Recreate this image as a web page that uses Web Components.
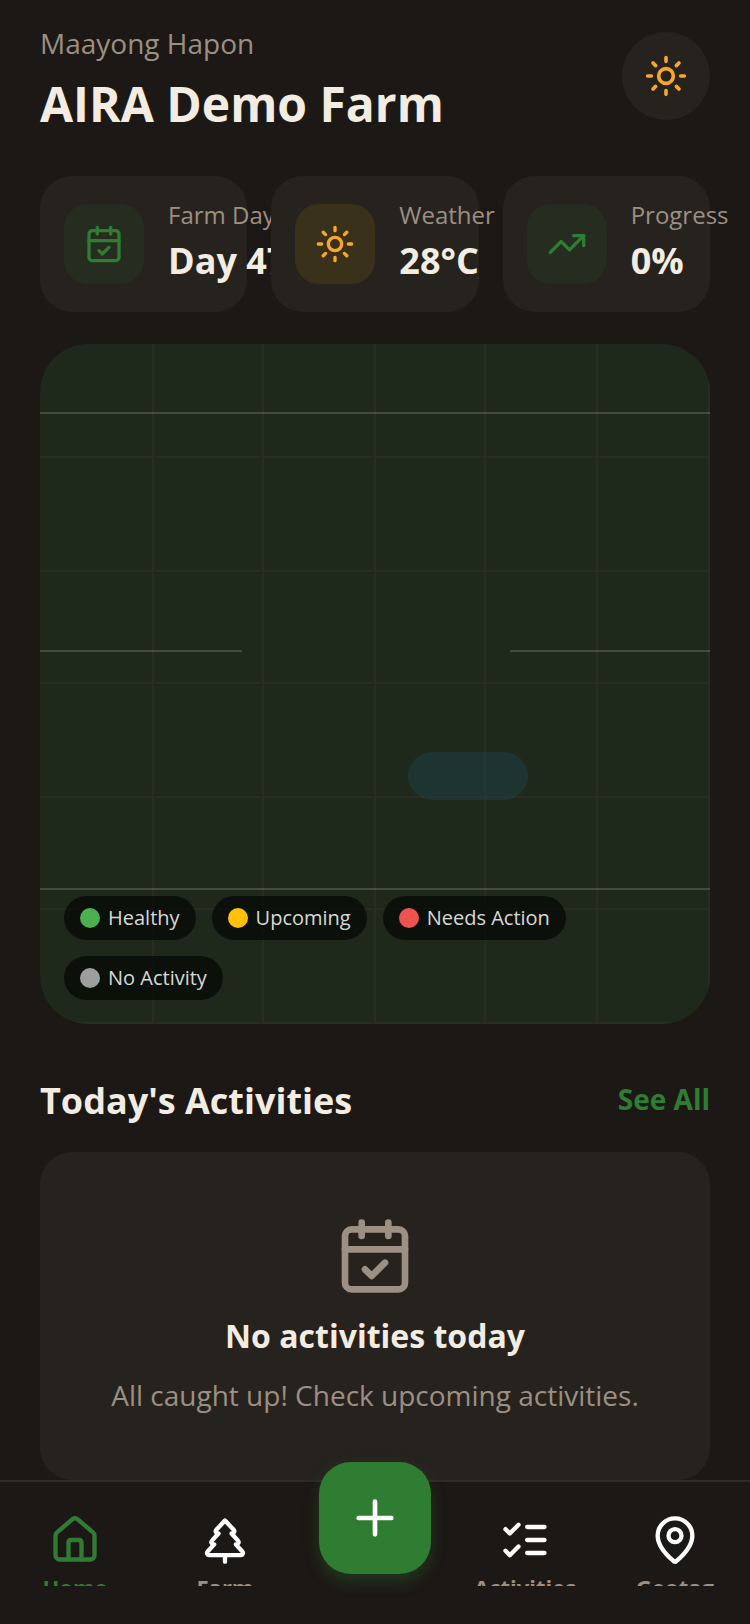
<!DOCTYPE html>
<html lang="en">
<head>
<meta charset="utf-8">
<meta name="viewport" content="width=device-width, initial-scale=1">
<title>AIRA Demo Farm</title>
<style>
  :root {
    --bg: #1c1815;
    --card: #26231e;
    --line: #2f2b28;
    --text: #f2ece2;
    --muted: #9c8f84;
    --green: #2e7d32;
    --amber: #f9a72b;
  }
  body {
    margin: 0;
    background: var(--bg);
    color: var(--text);
    font-family: "Open Sans", "Noto Sans", sans-serif;
  }
</style>
</head>
<body>

<farm-app>
  <farm-header greeting="Maayong Hapon" name="AIRA Demo Farm"></farm-header>

  <stat-row>
    <stat-card icon="calendar" label="Farm Day" value="Day 47"></stat-card>
    <stat-card icon="sun" label="Weather" value="28°C" tone="amber"></stat-card>
    <stat-card icon="trend" label="Progress" value="0%"></stat-card>
  </stat-row>

  <farm-map>
    <map-chip color="#4caf50">Healthy</map-chip>
    <map-chip color="#ffc107">Upcoming</map-chip>
    <map-chip color="#ef5350">Needs Action</map-chip>
    <map-chip color="#9e9e9e">No Activity</map-chip>
  </farm-map>

  <farm-section heading="Today's Activities" link="See All">
    <empty-state icon="calendar" heading="No activities today">All caught up! Check upcoming activities.</empty-state>
  </farm-section>

  <tab-bar slot="nav">
    <tab-item icon="home" active>Home</tab-item>
    <tab-item icon="tree">Farm</tab-item>
    <add-button></add-button>
    <tab-item icon="checks">Activities</tab-item>
    <tab-item icon="pin">Geotag</tab-item>
  </tab-bar>
</farm-app>

<script>
const ICONS = {
  sun: `<circle cx="12" cy="12" r="4"/><path d="M12 2v2M12 20v2M4.93 4.93l1.41 1.41M17.66 17.66l1.41 1.41M2 12h2M20 12h2M6.34 17.66l-1.41 1.41M19.07 4.93l-1.41 1.41"/>`,
  calendar: `<path d="M8 2v4M16 2v4"/><rect width="18" height="18" x="3" y="4" rx="2"/><path d="M3 10h18M9 16l2 2 4-4"/>`,
  trend: `<path d="M22 7l-8.5 8.5-5-5L2 17"/><path d="M16 7h6v6"/>`,
  home: `<path d="M15 21v-8a1 1 0 0 0-1-1h-4a1 1 0 0 0-1 1v8"/><path d="M3 10a2 2 0 0 1 .709-1.528l7-5.999a2 2 0 0 1 2.582 0l7 5.999A2 2 0 0 1 21 10v9a2 2 0 0 1-2 2H5a2 2 0 0 1-2-2z"/>`,
  tree: `<path d="m17 14 3 3.3a1 1 0 0 1-.7 1.7H4.7a1 1 0 0 1-.7-1.7L7 14h-.3a1 1 0 0 1-.7-1.7L9 9h-.2A1 1 0 0 1 8 7.3L12 3l4 4.3a1 1 0 0 1-.8 1.7H15l3 3.3a1 1 0 0 1-.7 1.7H17Z"/><path d="M12 22v-3"/>`,
  checks: `<path d="m3 17 2 2 4-4M3 7l2 2 4-4M13 6h8M13 12h8M13 18h8"/>`,
  pin: `<path d="M20 10c0 4.993-5.539 10.193-7.399 11.799a1 1 0 0 1-1.202 0C9.539 20.193 4 14.993 4 10a8 8 0 0 1 16 0"/><circle cx="12" cy="10" r="3"/>`,
  plus: `<path d="M5 12h14M12 5v14"/>`,
};

class FarmElement extends HTMLElement {
  constructor() {
    super();
    this.attachShadow({ mode: "open" });
  }

  connectedCallback() {
    this.shadowRoot.innerHTML = `<style>${this.css()}</style>${this.html()}`;
  }

  attr(name) {
    return this.getAttribute(name) || "";
  }
}

class FarmIcon extends FarmElement {
  css() {
    return `
      :host{ display: block; flex: none; width: ${this.attr("size")}px; height: ${this.attr("size")}px; }
      svg{ display: block; width: 100%; height: 100%; }
    `;
  }

  html() {
    return `
      <svg viewBox="0 0 24 24" fill="none" stroke="currentColor" stroke-width="2"
        stroke-linecap="round" stroke-linejoin="round" aria-hidden="true">${ICONS[this.attr("name")]}</svg>
    `;
  }
}

class FarmApp extends FarmElement {
  css() {
    return `
      :host{ display: grid; grid-template-rows: minmax(0, 1fr) auto; height: 100vh; }
      main{ overflow: hidden auto; scrollbar-width: none; }
    `;
  }

  html() {
    return `<main><slot></slot></main><slot name="nav"></slot>`;
  }
}

class FarmHeader extends FarmElement {
  css() {
    return `
      :host{ display: block; }
      header{ display: flex; justify-content: space-between; align-items: flex-start; padding: 24px 40px 36px; }
      p, h1{ margin: 0; }
      p{ color: var(--muted); font-size: 28px; line-height: 38px; }
      h1{ margin-top: 6px; font-size: 48px; line-height: 72px; font-weight: 700; }
      button{
        display: grid;
        place-items: center;
        width: 88px;
        height: 88px;
        margin: 8px 0 0;
        padding: 0;
        border: 0;
        border-radius: 50%;
        background: var(--card);
        color: var(--amber);
      }
    `;
  }

  html() {
    return `
      <header>
        <div>
          <p>${this.attr("greeting")}</p>
          <h1>${this.attr("name")}</h1>
        </div>
        <button type="button" aria-label="Weather"><farm-icon name="sun" size="44"></farm-icon></button>
      </header>
    `;
  }
}

class StatRow extends FarmElement {
  css() {
    return `
      :host{
        display: grid;
        grid-template-columns: repeat(3, minmax(0, 1fr));
        gap: 24px;
        padding: 0 40px;
      }
    `;
  }

  html() {
    return `<slot></slot>`;
  }
}

class StatCard extends FarmElement {
  css() {
    const amber = this.attr("tone") === "amber";
    return `
      /* each card paints over the text that runs out of the one before it */
      :host{
        position: relative;
        display: flex;
        align-items: center;
        gap: 24px;
        padding: 22px 24px;
        border-radius: 32px;
        background: var(--card);
        white-space: nowrap;
      }
      .icon{
        display: grid;
        place-items: center;
        flex: none;
        width: 80px;
        height: 80px;
        border-radius: 24px;
        background: ${amber ? "#3a311b" : "#262c20"};
        color: ${amber ? "var(--amber)" : "var(--green)"};
      }
      p{ margin: 0; }
      .label{ color: var(--muted); font-size: 24px; line-height: 34px; }
      .value{ font-size: 36px; line-height: 58px; font-weight: 700; }
    `;
  }

  html() {
    return `
      <div class="icon"><farm-icon name="${this.attr("icon")}" size="40"></farm-icon></div>
      <div>
        <p class="label">${this.attr("label")}</p>
        <p class="value">${this.attr("value")}</p>
      </div>
    `;
  }
}

class FarmMap extends FarmElement {
  css() {
    return `
      :host{
        position: relative;
        display: flex;
        align-items: flex-end;
        height: 680px;
        margin: 32px 40px 0;
        border-radius: 48px;
        background: #1f291b;
        overflow: hidden;
      }
      svg{ position: absolute; inset: 0; width: 100%; height: 100%; }
      .legend{ position: relative; display: flex; flex-wrap: wrap; gap: 16px; padding: 24px; }
    `;
  }

  html() {
    return `
      <svg viewBox="0 0 670 680" preserveAspectRatio="none" aria-hidden="true">
        <path d="M113 0v680M223 0v680M335 0v680M445 0v680M557 0v680M669 0v680
          M0 113h670M0 227h670M0 339h670M0 453h670M0 565h670M0 679h670"
          fill="none" stroke="#2a2b21" stroke-width="2"/>
        <path d="M0 69h670M0 307h202M470 307h200M0 545h670"
          fill="none" stroke="#f5f0e6" stroke-opacity=".18" stroke-width="2"/>
        <rect x="368" y="408" width="120" height="48" rx="24" fill="#1976b4" fill-opacity=".14"/>
      </svg>
      <div class="legend"><slot></slot></div>
    `;
  }
}

class MapChip extends FarmElement {
  css() {
    return `
      :host{
        display: flex;
        align-items: center;
        gap: 8px;
        padding: 8px 16px;
        border-radius: 24px;
        background: rgba(0, 0, 0, .6);
        color: #d7dad3;
        font-size: 20px;
        line-height: 28px;
      }
      i{ width: 20px; height: 20px; border-radius: 50%; background: ${this.attr("color")}; }
    `;
  }

  html() {
    return `<i></i><span><slot></slot></span>`;
  }
}

class FarmSection extends FarmElement {
  css() {
    return `
      :host{ display: block; padding: 48px 40px 0; }
      .head{ display: flex; justify-content: space-between; align-items: flex-start; margin-bottom: 22px; }
      h2{ margin: 0; font-size: 36px; line-height: 58px; font-weight: 700; }
      a{ color: var(--green); font-size: 28px; line-height: 54px; font-weight: 700; text-decoration: none; }
    `;
  }

  html() {
    return `
      <div class="head">
        <h2>${this.attr("heading")}</h2>
        <a href="#activities">${this.attr("link")}</a>
      </div>
      <slot></slot>
    `;
  }
}

class EmptyState extends FarmElement {
  css() {
    return `
      :host{
        display: flex;
        flex-direction: column;
        align-items: center;
        gap: 16px;
        padding: 64px 40px 66px;
        border-radius: 32px;
        background: var(--card);
        color: var(--muted);
        text-align: center;
      }
      h3, p{ margin: 0; }
      h3{ color: var(--text); font-size: 32px; line-height: 48px; font-weight: 700; }
      p{ font-size: 28px; line-height: 38px; }
    `;
  }

  html() {
    return `
      <farm-icon name="${this.attr("icon")}" size="80"></farm-icon>
      <h3>${this.attr("heading")}</h3>
      <p><slot></slot></p>
    `;
  }
}

class TabBar extends FarmElement {
  css() {
    return `
      :host{ display: block; position: relative; }
      nav{
        display: grid;
        grid-template-columns: repeat(5, minmax(0, 1fr));
        height: 104px;
        padding-bottom: 38px;
        border-top: 2px solid var(--line);
        background: var(--bg);
      }
    `;
  }

  html() {
    return `<nav><slot></slot></nav>`;
  }
}

class TabItem extends FarmElement {
  css() {
    const active = this.hasAttribute("active");
    return `
      :host{ display: block; height: 104px; overflow: hidden; }
      a{
        display: flex;
        flex-direction: column;
        align-items: center;
        gap: 6px;
        padding-top: 32px;
        color: ${active ? "var(--green)" : "var(--muted)"};
        font-size: 22px;
        line-height: 30px;
        font-weight: 700;
        text-decoration: none;
      }
      farm-icon{ color: ${active ? "var(--green)" : "#fff"}; }
    `;
  }

  html() {
    return `
      <a href="#${this.attr("icon")}">
        <farm-icon name="${this.attr("icon")}" size="52"></farm-icon>
        <span><slot></slot></span>
      </a>
    `;
  }
}

class AddButton extends FarmElement {
  css() {
    return `
      :host{ display: flex; justify-content: center; margin-top: -20px; }
      button{
        display: grid;
        place-items: center;
        width: 112px;
        height: 112px;
        padding: 0;
        border: 0;
        border-radius: 32px;
        background: var(--green);
        color: #fff;
        box-shadow: 0 8px 16px rgba(46, 125, 50, .3);
      }
    `;
  }

  html() {
    return `<button type="button" aria-label="Add"><farm-icon name="plus" size="56"></farm-icon></button>`;
  }
}

customElements.define("farm-icon", FarmIcon);
customElements.define("farm-app", FarmApp);
customElements.define("farm-header", FarmHeader);
customElements.define("stat-row", StatRow);
customElements.define("stat-card", StatCard);
customElements.define("farm-map", FarmMap);
customElements.define("map-chip", MapChip);
customElements.define("farm-section", FarmSection);
customElements.define("empty-state", EmptyState);
customElements.define("tab-bar", TabBar);
customElements.define("tab-item", TabItem);
customElements.define("add-button", AddButton);
</script>
</body>
</html>
